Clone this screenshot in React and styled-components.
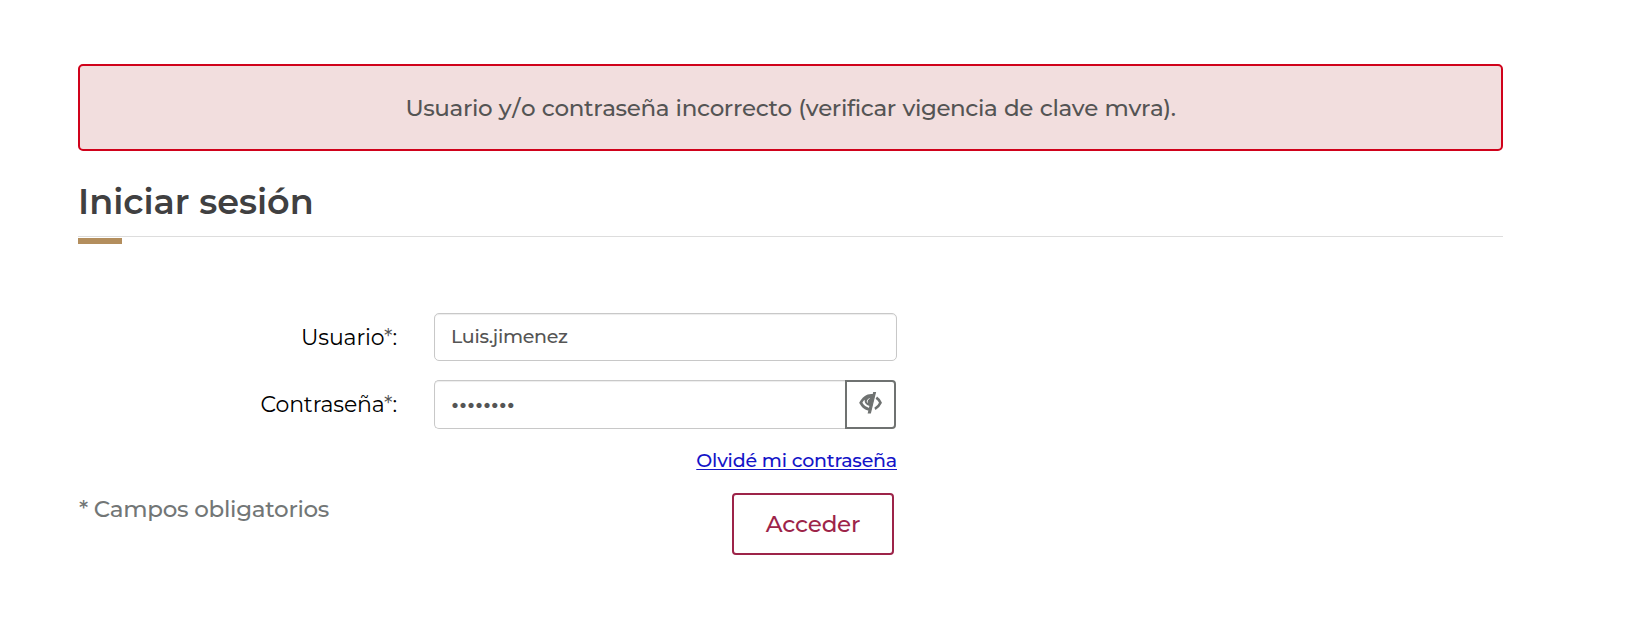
import React from "react";
import styled, { createGlobalStyle } from "styled-components";

const GlobalStyle = createGlobalStyle`
  *, *::before, *::after { box-sizing: border-box; }
  body {
    margin: 0;
    background: #fff;
    font-family: Montserrat, Inter, "Open Sans", sans-serif;
    font-weight: 400;
  }
`;

const Page = styled.main`
  width: 1503px;
  padding: 64px 0 0 78px;
`;

const Alert = styled.div`
  display: flex;
  align-items: center;
  justify-content: center;
  height: 87px;
  border: 2px solid #d0021b;
  border-radius: 5px;
  background: #f2dede;
  color: #545454;
  font-size: 23px;
  font-weight: 500;
  font-kerning: none;
  letter-spacing: -0.39px;
  word-spacing: 0.8px;
  white-space: pre;
`;

const Slash = styled.span`
  margin: 0 1px;
`;

const Header = styled.header`
  height: 93px;
`;

const Title = styled.h3`
  height: 86px;
  margin: 0;
  padding-top: 31px;
  border-bottom: 1px solid #ddd;
  color: #404041;
  font-size: 35px;
  font-weight: 600;
  line-height: 40px;
  white-space: nowrap;
`;

const Accent = styled.div`
  width: 44px;
  height: 6px;
  margin-top: 1px;
  background: #b38e5d;
`;

const Form = styled.form`
  display: flex;
  flex-direction: column;
  width: 819px;
  padding-top: 69px;
`;

const Row = styled.div`
  display: flex;
  align-items: center;
  height: ${(p) => p.$height}px;
  margin-bottom: 19px;
`;

const Label = styled.label`
  width: 319px;
  margin-right: 37px;
  color: #000;
  font-size: 22px;
  letter-spacing: -0.13px;
  text-align: right;
  white-space: nowrap;
`;

const Star = styled.span`
  color: #545454;
`;

const Field = styled.div`
  display: flex;
  flex: 1;
  height: 100%;
`;

const Input = styled.input`
  flex: 1;
  min-width: 0;
  height: 100%;
  margin: 0;
  padding: 0 16px ${(p) => (p.$joined ? 3 : 1)}px;
  border: 1px solid #c8c8c8;
  border-right-width: ${(p) => (p.$joined ? 0 : 1)}px;
  border-radius: ${(p) => (p.$joined ? "5px 0 0 5px" : "5px")};
  outline: none;
  background: #fff;
  box-shadow: inset 0 1px 1px rgba(0, 0, 0, 0.075);
  color: #555;
  font-family: inherit;
  font-size: ${(p) => p.$size}px;
  font-weight: ${(p) => (p.$joined ? 600 : 500)};
  letter-spacing: ${(p) => p.$spacing}px;
`;

const EyeButton = styled.button`
  display: flex;
  align-items: center;
  justify-content: center;
  width: 51px;
  height: 100%;
  margin-right: 1px;
  padding: 0 0 3px;
  border: 2px solid #6f7271;
  border-radius: 0 4px 4px 0;
  background: #fff;
`;

const Forgot = styled.a`
  align-self: flex-end;
  height: 24px;
  margin-top: 1px;
  color: #1414c8;
  font-size: 19px;
  font-weight: 500;
  line-height: 24px;
  letter-spacing: -0.2px;
  text-underline-offset: 2px;
  text-decoration-thickness: 1px;
  white-space: nowrap;
`;

const Footer = styled.div`
  display: flex;
  align-items: flex-start;
  justify-content: space-between;
  padding: 20px 3px 0 0;
`;

const Note = styled.p`
  margin: 0;
  padding-left: 1px;
  color: #727676;
  font-size: 23px;
  font-weight: 500;
  line-height: 32px;
  letter-spacing: -0.28px;
  white-space: nowrap;
`;

const Submit = styled.button`
  width: 162px;
  height: 62px;
  padding: 0;
  border: 2px solid #9d2449;
  border-radius: 4px;
  background: #fff;
  color: #9d2449;
  font-family: inherit;
  font-size: 23px;
  font-weight: 500;
  letter-spacing: -0.22px;
`;

function EyeClosed() {
  return (
    <svg width="24" height="22" viewBox="0 0 24 22" fill="none" aria-hidden="true">
      <path
        d="M.2 10.7C3.2 5.1 7.4 2 12.3 2c1 0 1.8.1 2.8.3L10.8 18.9C5.9 18.2 2.3 15.2.2 10.7Z"
        fill="#6f7271"
      />
      <path d="M3.4 10.8c.7-1.5 1.3-2.3 2.3-3-.3 3 1.1 5.2 5 6.2l-.5 1.9C7.2 15.1 4.8 13.4 3.4 10.8Z" fill="#fff" />
      <path d="M10.5 6.5c-1.8.8-2.6 2.3-2 4" stroke="#fff" strokeWidth="1" />
      <path d="M16.4.5h-1.7L9.4 21h2Z" fill="#6f7271" stroke="#6f7271" strokeWidth="1.2" />
      <path d="M17.3 5.6c2 1.3 3.3 2.9 4.2 5.1-1.1 2.5-3 4.7-5.6 6.1" stroke="#6f7271" strokeWidth="2.6" />
    </svg>
  );
}

export default function App() {
  return (
    <>
      <GlobalStyle />
      <Page>
        <Alert role="alert">
          <span>
            Usuario y<Slash>/</Slash>o contraseña incorrecto (verificar vigencia de clave mvra).
          </span>
        </Alert>
        <Header>
          <Title>Iniciar sesión</Title>
          <Accent />
        </Header>
        <Form onSubmit={(e) => e.preventDefault()}>
          <Row $height={48}>
            <Label htmlFor="user">Usuario<Star>*</Star>:</Label>
            <Field>
              <Input id="user" type="text" defaultValue="Luis.jimenez" $size={19} $spacing={-0.3} />
            </Field>
          </Row>
          <Row $height={49}>
            <Label htmlFor="password">Contraseña<Star>*</Star>:</Label>
            <Field>
              <Input id="password" type="password" defaultValue="abcdefgh" $joined $size={24} $spacing={-0.1} />
              <EyeButton type="button" aria-label="Mostrar contraseña">
                <EyeClosed />
              </EyeButton>
            </Field>
          </Row>
          <Forgot href="#">Olvidé mi contraseña</Forgot>
          <Footer>
            <Note>* Campos obligatorios</Note>
            <Submit type="submit">Acceder</Submit>
          </Footer>
        </Form>
      </Page>
    </>
  );
}
